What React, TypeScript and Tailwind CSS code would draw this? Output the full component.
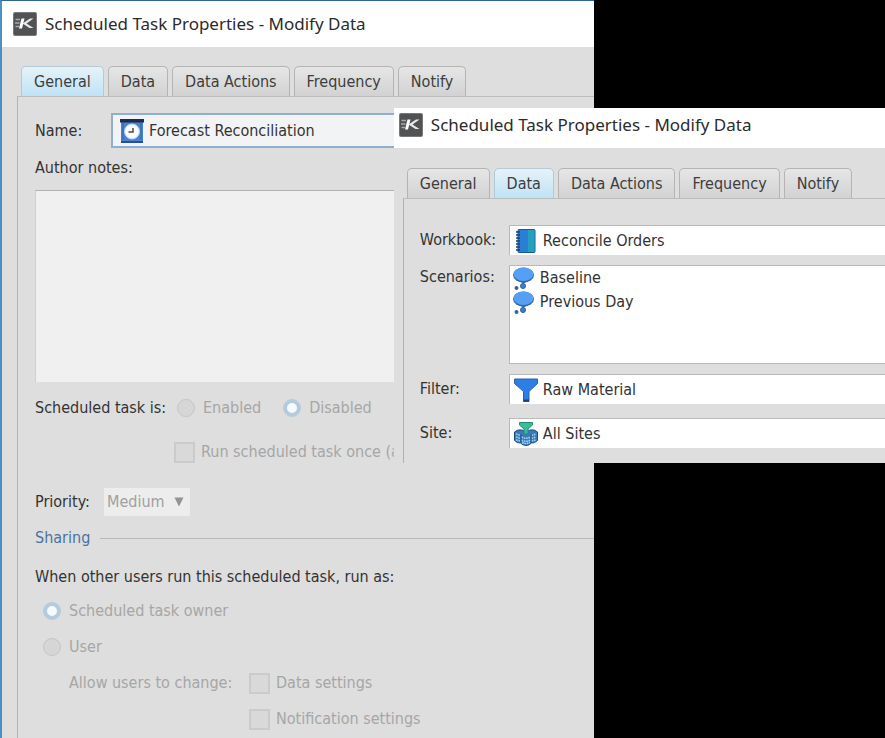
import { useState, type ReactNode } from 'react';
import clsx from 'clsx';

const tabs = ['General', 'Data', 'Data Actions', 'Frequency', 'Notify'];

function AppIcon() {
  return (
    <svg viewBox="0 0 24 24" className="size-6 shrink-0" aria-hidden="true">
      <rect width="24" height="24" rx="2" fill="#77787a" />
      <rect x="1" y="1" width="22" height="22" rx="1" fill="#515254" />
      <path d="M2.500 7.500h4.500M2 11h4.500M2.500 14.500h3.500" stroke="#a9a9a9" strokeWidth="1.500" />
      <path d="M8.500 6.500h3l-2.500 10h-3z" fill="#fff" />
      <path d="M20.500 6.500h-3.500L9.500 11.500L16.500 16h4L13.500 11.500z" fill="#e9e9e9" />
    </svg>
  );
}

function TaskIcon() {
  return (
    <svg viewBox="0 0 24 24" className="size-6 shrink-0" aria-hidden="true">
      <rect x="1" y="2" width="22" height="21" fill="#4a82cf" />
      <path d="M3 4v17M21 4v17" stroke="#2f67b8" strokeWidth="1" />
      <rect width="24" height="3.500" fill="#1d2c4c" />
      <rect x="1" y="22" width="22" height="2" fill="#28509a" />
      <circle cx="12" cy="12.500" r="7.500" fill="#f7faff" stroke="#bcd3f2" />
      <path d="M13 9v4H8.500" stroke="#55482f" strokeWidth="1.500" fill="none" />
    </svg>
  );
}

function WorkbookIcon() {
  return (
    <svg viewBox="0 0 24 24" className="size-6 shrink-0" aria-hidden="true">
      <rect x="4" y="0.500" width="17" height="23" rx="1" fill="#2a7fd4" stroke="#1c5a94" />
      <rect x="14" y="1" width="6.500" height="22" fill="#25a0bd" />
      <path d="M2 3h4M2 6h4M2 9h4M2 12h4M2 15h4M2 18h4M2 21h4" stroke="#16416f" strokeWidth="1.300" />
    </svg>
  );
}

function ScenarioIcon() {
  return (
    <svg viewBox="0 0 24 24" className="size-6 shrink-0" aria-hidden="true">
      <ellipse cx="11.500" cy="9" rx="10.500" ry="7.500" fill="#2f6aae" />
      <ellipse cx="11.500" cy="8.300" rx="9.800" ry="6.800" fill="#559ff5" />
      <path d="M7.500 15.500h8l-4 2z" fill="#2f6aae" />
      <circle cx="11" cy="20" r="2.500" fill="#3f7fcb" stroke="#2d5f9d" />
      <circle cx="4.500" cy="22" r="2" fill="#3c6393" />
    </svg>
  );
}

function FilterIcon() {
  return (
    <svg viewBox="0 0 24 24" className="size-6 shrink-0" aria-hidden="true">
      <path
        d="M0.500 1h23v4.500L15 13.500V23.500H9.500V13.500L0.500 5.500z"
        fill="#2f7de6"
        stroke="#2a62a8"
      />
      <path d="M9.500 22.500h5.500" stroke="#1f3f6d" strokeWidth="2" />
    </svg>
  );
}

function SiteIcon() {
  return (
    <svg viewBox="0 0 24 24" className="size-6 shrink-0" aria-hidden="true">
      <path
        d="M0.500 10Q3.500 7 8 8L12 10l4-2q4.500-1 7.500 2v8.500q-3 3-6 2.500-2.500 2.500-5.500 2.500t-5.500-2.500q-3 .5-6-2.500z"
        fill="#3a7ab5"
        stroke="#1d4f86"
      />
      <path
        d="M2 12l4.500 1.500M2 15l4.500 1.500M2 18l4.500 1M17.500 13.500L22 12M17.500 16.500L22 15M17.500 19L22 18M7.500 15q4.500 2.500 9 0M7.500 18q4.500 2.500 9 0M8 20.500q4 2 8 0"
        stroke="#9ad0f7"
        strokeWidth="1.700"
        strokeDasharray="1.700 .7"
        fill="none"
      />
      <path d="M7 12v9M17 12v9" stroke="#1d4f86" />
      <path d="M5.500 0.500h13v2.500l-4.500 4v5h-4V7l-4.500-4z" fill="#38bd98" stroke="#258a77" />
    </svg>
  );
}

function TitleBar() {
  return (
    <header className="flex items-center gap-2 bg-white">
      <AppIcon />
      <h1 className="truncate font-['Noto_Sans'] text-[17px] leading-6 text-[#2b2b2b]">
        Scheduled Task Properties - Modify Data
      </h1>
    </header>
  );
}

function TabBar({ initial }: { initial: string }) {
  const [active, setActive] = useState(initial);

  return (
    <div role="tablist" className="flex gap-1 pl-1">
      {tabs.map((tab) => (
        <button
          key={tab}
          type="button"
          role="tab"
          aria-selected={tab === active}
          onClick={() => setActive(tab)}
          className={clsx(
            'h-[30px] whitespace-nowrap rounded-t-[5px] border border-b-0 px-3 leading-7 text-[#3d3d3d]',
            tab === active
              ? 'border-[#b3cad8] bg-linear-to-b from-[#e6f2f8] to-[#bfe3f6]'
              : 'border-[#b4b4b4] bg-linear-to-b from-[#e6e6e6] to-[#d2d2d2]',
          )}
        >
          {tab}
        </button>
      ))}
    </div>
  );
}

function Radio({ name, label, checked }: { name: string; label: string; checked?: boolean }) {
  return (
    <label className="flex items-center gap-2 text-[#a6a6a6]">
      <input
        type="radio"
        name={name}
        defaultChecked={checked}
        disabled
        className="size-[18px] appearance-none rounded-full border border-[#c6c6c6] bg-[#d6d6d6] checked:border-4 checked:border-[#b4cbdc] checked:bg-[#f4fafd]"
      />
      {label}
    </label>
  );
}

function Checkbox({ label }: { label: string }) {
  return (
    <label className="flex items-center gap-[6px] whitespace-nowrap text-[#a6a6a6]">
      <input
        type="checkbox"
        disabled
        className="size-[21px] shrink-0 appearance-none border-2 border-[#cbcbcb] bg-[#d9d9d9]"
      />
      {label}
    </label>
  );
}

function Field({ id, label, value, icon }: { id: string; label: string; value: string; icon: ReactNode }) {
  return (
    <div className="flex items-center">
      <label htmlFor={id} className="w-[89px] shrink-0">
        {label}
      </label>
      <div className="flex h-[30px] min-w-0 flex-1 items-center gap-[5px] border-t border-l border-[#b9b9b9] bg-white pl-1">
        {icon}
        <input id={id} defaultValue={value} className="min-w-0 flex-1 bg-transparent outline-none" />
      </div>
    </div>
  );
}

function GeneralWindow() {
  return (
    <section className="flex min-h-screen w-[67.1%] flex-col border-t border-l-2 border-t-[#2f6593] border-l-[#4c8fc4] bg-[#dedede]">
      <div className="bg-white py-[11px] pl-[11px]">
        <TitleBar />
      </div>
      <div className="flex flex-1 flex-col pt-[19px] pl-[15px]">
        <TabBar initial="General" />
        <div className="flex-1 border-t border-l border-t-[#bcbcbc] border-l-[#b4b4b4] pt-4 pl-[17px]">
          <div className="flex items-center">
            <label htmlFor="name" className="w-[76px]">
              Name:
            </label>
            <div className="flex h-[35px] flex-1 items-center gap-[5px] border-2 border-[#8faed0] bg-[#f1f3f5] pl-[7px]">
              <TaskIcon />
              <input
                id="name"
                defaultValue="Forecast Reconciliation"
                className="min-w-0 flex-1 bg-transparent outline-none"
              />
            </div>
          </div>
          <label htmlFor="notes" className="mt-2 block leading-6">
            Author notes:
          </label>
          <textarea
            id="notes"
            className="mt-[10px] block h-[192px] w-full resize-none border-t border-l border-t-[#b0b0b0] border-l-[#cfcfcf] bg-[#f0f0f0] outline-none"
          />
          <fieldset className="mt-[14px] flex h-6 items-center">
            <legend className="float-left w-[142px]">Scheduled task is:</legend>
            <div className="flex gap-[22px]">
              <Radio name="state" label="Enabled" />
              <Radio name="state" label="Disabled" checked />
            </div>
          </fieldset>
          <div className="mt-5 flex h-6 items-center pl-[139px]">
            <Checkbox label="Run scheduled task once (after saving)" />
          </div>
          <div className="mt-6 flex h-7 items-center">
            <label htmlFor="priority" className="w-[69px]">
              Priority:
            </label>
            <div className="relative">
              <select
                id="priority"
                disabled
                className="h-7 w-[86px] appearance-none bg-[#ededed] pl-[3px] text-[#a0a0a0]"
              >
                <option>Medium</option>
              </select>
              <svg
                viewBox="0 0 10 10"
                className="pointer-events-none absolute top-[9px] right-[6px] size-[10px]"
                aria-hidden="true"
              >
                <path d="M0.500 0.500h9L5 9.500z" fill="#949494" />
              </svg>
            </div>
          </div>
          <div className="mt-[10px] flex items-center gap-[10px]">
            <h2 className="leading-6 text-[#4a73a0]">Sharing</h2>
            <hr className="flex-1 border-[#b8b8b8]" />
          </div>
          <fieldset className="mt-[15px]">
            <legend className="leading-6">When other users run this scheduled task, run as:</legend>
            <div className="mt-[10px] flex flex-col gap-3 pl-2 leading-6">
              <Radio name="runas" label="Scheduled task owner" checked />
              <Radio name="runas" label="User" />
              <div className="flex pl-[26px]">
                <span className="w-[180px] text-[#a6a6a6]">Allow users to change:</span>
                <div className="flex flex-col gap-3">
                  <Checkbox label="Data settings" />
                  <Checkbox label="Notification settings" />
                </div>
              </div>
            </div>
          </fieldset>
        </div>
      </div>
    </section>
  );
}

function DataWindow() {
  return (
    <section className="absolute top-[108px] right-0 w-[55.5%] bg-[#dedede]">
      <div className="bg-white pt-[5px] pb-[11px] pl-[5px]">
        <TitleBar />
      </div>
      <div className="pt-5 pl-[9px]">
        <TabBar initial="Data" />
        <div className="flex flex-col border-t border-l border-t-[#bcbcbc] border-l-[#b0b0b0] pt-[26px] pb-[15px] pl-4">
          <Field id="workbook" label="Workbook:" value="Reconcile Orders" icon={<WorkbookIcon />} />
          <div className="mt-[10px] flex">
            <span id="scenarios" className="w-[89px] shrink-0 leading-6">
              Scenarios:
            </span>
            <ul
              aria-labelledby="scenarios"
              className="h-[99px] flex-1 border border-r-0 border-[#b9b9b9] bg-white pl-[2px]"
            >
              {['Baseline', 'Previous Day'].map((scenario) => (
                <li key={scenario} className="flex h-6 items-center gap-1">
                  <ScenarioIcon />
                  {scenario}
                </li>
              ))}
            </ul>
          </div>
          <div className="mt-[10px] flex flex-col gap-[14px]">
            <Field id="filter" label="Filter:" value="Raw Material" icon={<FilterIcon />} />
            <Field id="site" label="Site:" value="All Sites" icon={<SiteIcon />} />
          </div>
        </div>
      </div>
    </section>
  );
}

export default function App() {
  return (
    <main className="relative min-h-screen overflow-hidden bg-black font-['DejaVu_Sans_Condensed','DejaVu_Sans',sans-serif] text-base text-[#333]">
      <GeneralWindow />
      <DataWindow />
    </main>
  );
}
